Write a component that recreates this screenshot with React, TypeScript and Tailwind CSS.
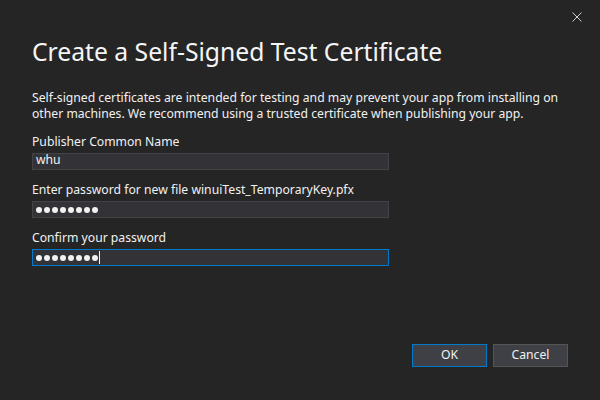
import React from 'react';

const Dots: React.FC<{ count: number }> = ({ count }) => (
  <div className="flex items-center gap-[2px]">
    {Array.from({ length: count }).map((_, i) => (
      <span key={i} className="w-[6px] h-[6px] rounded-full bg-[#f1f1f1]" />
    ))}
  </div>
);

const Field: React.FC<{ label: string; focused?: boolean; children: React.ReactNode }> = ({ label, focused, children }) => (
  <div className="flex flex-col">
    <label className="leading-[16px] mb-[3px]">{label}</label>
    <div
      className={`w-[357px] h-[17px] bg-[#333337] border flex items-center pl-[3px] ${
        focused ? 'border-[#007acc]' : 'border-[#434346]'
      }`}
    >
      {children}
    </div>
  </div>
);

const App: React.FC = () => {
  return (
    <div className="relative w-[600px] h-[400px] bg-[#252526] text-[#f1f1f1] font-['Noto_Sans',sans-serif] text-[12.2px] flex flex-col overflow-hidden">
      {/* close */}
      <button className="absolute top-[12px] left-[572px] w-[10px] h-[10px] text-[#cfcfcf]">
        <svg width="10" height="10" viewBox="0 0 10 10" fill="none" stroke="currentColor" strokeWidth="1">
          <path d="M0.5 0.5 L9.5 9.5 M9.5 0.5 L0.5 9.5" />
        </svg>
      </button>

      <div className="pt-[36px] pl-[32px] pr-[32px]">
        <h1 className="text-[24.7px] leading-[32px] text-[#f5f5f5]">Create a Self-Signed Test Certificate</h1>
        <p className="mt-[22px] leading-[16px] w-[540px]">
          Self-signed certificates are intended for testing and may prevent your app from installing on other machines.
          We recommend using a trusted certificate when publishing your app.
        </p>

        <div className="mt-[12px] flex flex-col gap-[12px]">
          <Field label="Publisher Common Name">
            <span className="leading-[12px] self-start">whu</span>
          </Field>
          <Field label="Enter password for new file winuiTest_TemporaryKey.pfx">
            <Dots count={8} />
          </Field>
          <Field label="Confirm your password" focused>
            <Dots count={8} />
            <span className="ml-[1px] w-[1px] h-[13px] bg-[#f1f1f1]" />
          </Field>
        </div>
      </div>

      <div className="mt-auto flex justify-end gap-[6px] pr-[32px] pb-[33px]">
        <button className="w-[75px] h-[23px] bg-[#3f3f46] border border-[#007acc] text-[#f1f1f1] leading-none">OK</button>
        <button className="w-[75px] h-[23px] bg-[#3f3f46] border border-[#555555] text-[#f1f1f1] leading-none">Cancel</button>
      </div>
    </div>
  );
};

export default App;
